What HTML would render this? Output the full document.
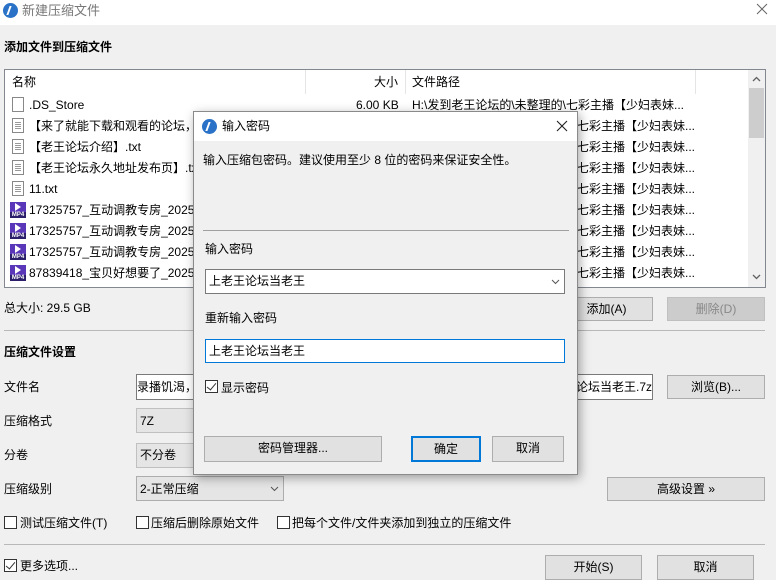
<!DOCTYPE html>
<html><head><meta charset="utf-8"><style>
*{box-sizing:border-box;margin:0;padding:0}
body{width:776px;height:579px;overflow:hidden;background:#f0f0f0;font-family:"Liberation Sans","Noto Sans CJK SC",sans-serif;font-size:12px;color:#000;position:relative}
.a{position:absolute;white-space:nowrap;line-height:16px}
.b{position:absolute}
.btn{position:absolute;background:#e1e1e1;border:1px solid #adadad;text-align:center;line-height:22px;font-size:12px}
.sep{position:absolute;height:1px;background:#a0a0a0}
.cb{position:absolute;width:13px;height:13px;border:1px solid #333;background:#fff}
.cb.k::after{content:"";position:absolute;left:3px;top:0px;width:4px;height:8px;border:solid #333;border-width:0 1.5px 1.5px 0;transform:rotate(40deg)}
.doc{position:absolute;left:12px;width:12px;height:15px;border:1px solid #888;background:#fff}
.doc.l::after{content:"";position:absolute;left:2px;top:3px;width:6px;height:7px;background:repeating-linear-gradient(#999 0 1px,transparent 1px 2px)}
.mp4{position:absolute;left:10px;width:16px;height:16px;background:#5a36b8}
.mp4::before{content:"";position:absolute;left:5px;top:1px;border-left:6px solid #fff;border-top:4px solid transparent;border-bottom:4px solid transparent}
.mp4::after{content:"MP4";position:absolute;left:0;bottom:0;width:16px;height:6px;font-size:6px;line-height:6px;color:#fff;background:#2b1f6a;font-weight:bold;text-align:center}
.ico{position:absolute;width:15px;height:15px;border-radius:50%;background:#2a72c8}
.ico::after{content:"";position:absolute;left:5px;top:3px;width:5px;height:9px;border-left:2px solid #fff;transform:skewX(-20deg)}
svg{position:absolute}
</style></head><body>
<div class="b" style="left:0;top:0;width:776px;height:25px;background:#fff"></div>
<div class="ico" style="left:3px;top:3px"></div>
<div class="a" style="left:22px;top:3px;color:#777;font-size:13px">新建压缩文件</div>
<svg style="left:756px;top:3px" width="12" height="12"><path d="M1 1L11 11M11 1L1 11" stroke="#666" stroke-width="1"/></svg>

<div class="a" style="left:4px;top:39px;font-weight:bold">添加文件到压缩文件</div>

<div class="b" style="left:4px;top:69px;width:762px;height:219px;background:#fff;border:1px solid #828790"></div>
<div class="b" style="left:305px;top:70px;width:1px;height:24px;background:#e5e5e5"></div>
<div class="b" style="left:405px;top:70px;width:1px;height:24px;background:#e5e5e5"></div>
<div class="b" style="left:695px;top:70px;width:1px;height:24px;background:#e5e5e5"></div>
<div class="a" style="left:12px;top:74px">名称</div>
<div class="a" style="left:374px;top:74px">大小</div>
<div class="a" style="left:412px;top:74px">文件路径</div>
<div class="b" style="left:748px;top:70px;width:17px;height:217px;background:#f0f0f0"></div>
<div class="b" style="left:749px;top:88px;width:15px;height:50px;background:#cdcdcd"></div>
<svg style="left:752px;top:76px" width="9" height="6"><path d="M1 5L4.5 1.5L8 5" stroke="#606060" fill="none" stroke-width="1.3"/></svg>
<svg style="left:752px;top:274px" width="9" height="6"><path d="M1 1L4.5 4.5L8 1" stroke="#606060" fill="none" stroke-width="1.3"/></svg>

<div class="doc" style="top:97px"></div><div class="a" style="left:29px;top:97px">.DS_Store</div><div class="a" style="left:356px;top:97px">6.00 KB</div>
<div class="doc l" style="top:118px"></div><div class="a" style="left:29px;top:118px">【来了就能下载和观看的论坛，</div>
<div class="doc l" style="top:139px"></div><div class="a" style="left:29px;top:139px">【老王论坛介绍】.txt</div>
<div class="doc l" style="top:160px"></div><div class="a" style="left:29px;top:160px">【老王论坛永久地址发布页】.tx</div>
<div class="doc l" style="top:181px"></div><div class="a" style="left:29px;top:181px">11.txt</div>
<div class="mp4" style="top:202px"></div><div class="a" style="left:29px;top:202px">17325757_互动调教专房_2025</div>
<div class="mp4" style="top:223px"></div><div class="a" style="left:29px;top:223px">17325757_互动调教专房_2025</div>
<div class="mp4" style="top:244px"></div><div class="a" style="left:29px;top:244px">17325757_互动调教专房_2025</div>
<div class="mp4" style="top:265px"></div><div class="a" style="left:29px;top:265px">87839418_宝贝好想要了_2025</div>
<div class="a" style="left:412px;top:97px">H:\发到老王论坛的\未整理的\七彩主播【少妇表妹...</div>
<div class="a" style="left:577px;top:118px">七彩主播【少妇表妹...</div>
<div class="a" style="left:577px;top:139px">七彩主播【少妇表妹...</div>
<div class="a" style="left:577px;top:160px">七彩主播【少妇表妹...</div>
<div class="a" style="left:577px;top:181px">七彩主播【少妇表妹...</div>
<div class="a" style="left:577px;top:202px">七彩主播【少妇表妹...</div>
<div class="a" style="left:577px;top:223px">七彩主播【少妇表妹...</div>
<div class="a" style="left:577px;top:244px">七彩主播【少妇表妹...</div>
<div class="a" style="left:577px;top:265px">七彩主播【少妇表妹...</div>

<div class="a" style="left:4px;top:300px">总大小: 29.5 GB</div>
<div class="btn" style="left:560px;top:297px;width:93px;height:24px">添加(A)</div>
<div class="btn" style="left:667px;top:297px;width:98px;height:24px;background:#ccc;border-color:#bfbfbf;color:#888">删除(D)</div>
<div class="sep" style="left:4px;top:330px;width:761px;background:#b8b8b8"></div>

<div class="a" style="left:4px;top:344px;font-weight:bold">压缩文件设置</div>
<div class="a" style="left:4px;top:379px">文件名</div>
<div class="b" style="left:136px;top:374px;width:517px;height:26px;background:#fff;border:1px solid #7a7a7a"></div>
<div class="a" style="left:137px;top:379px">录播饥渴，</div>
<div class="a" style="left:576px;top:379px">论坛当老王.7z</div>
<div class="btn" style="left:667px;top:375px;width:98px;height:24px">浏览(B)...</div>
<div class="a" style="left:4px;top:413px">压缩格式</div>
<div class="b" style="left:136px;top:408px;width:147px;height:25px;background:#e5e5e5;border:1px solid #c0c0c0"></div>
<div class="a" style="left:140px;top:413px">7Z</div>
<div class="a" style="left:4px;top:447px">分卷</div>
<div class="b" style="left:136px;top:443px;width:147px;height:25px;background:#e5e5e5;border:1px solid #c0c0c0"></div>
<div class="a" style="left:140px;top:447px">不分卷</div>
<div class="a" style="left:4px;top:481px">压缩级别</div>
<div class="b" style="left:136px;top:476px;width:148px;height:25px;background:#e5e5e5;border:1px solid #adadad"></div>
<div class="a" style="left:140px;top:481px">2-正常压缩</div>
<svg style="left:270px;top:486px" width="9" height="6"><path d="M1 1L4.5 4.5L8 1" stroke="#555" fill="none" stroke-width="1"/></svg>
<div class="btn" style="left:607px;top:477px;width:158px;height:24px">高级设置 »</div>

<div class="cb" style="left:4px;top:516px"></div><div class="a" style="left:20px;top:515px">测试压缩文件(T)</div>
<div class="cb" style="left:136px;top:516px"></div><div class="a" style="left:151px;top:515px">压缩后删除原始文件</div>
<div class="cb" style="left:277px;top:516px"></div><div class="a" style="left:292px;top:515px">把每个文件/文件夹添加到独立的压缩文件</div>
<div class="sep" style="left:4px;top:544px;width:761px;background:#b8b8b8"></div>
<div class="cb k" style="left:4px;top:559px"></div><div class="a" style="left:20px;top:558px">更多选项...</div>
<div class="btn" style="left:545px;top:555px;width:97px;height:25px">开始(S)</div>
<div class="btn" style="left:657px;top:555px;width:97px;height:25px">取消</div>

<div class="b" style="left:193px;top:111px;width:385px;height:364px;background:#f0f0f0;border:1px solid #8a8a8a;box-shadow:2px 3px 10px rgba(0,0,0,.35)"></div>
<div class="b" style="left:194px;top:112px;width:383px;height:29px;background:#fff"></div>
<div class="ico" style="left:202px;top:119px"></div>
<div class="a" style="left:222px;top:118px">输入密码</div>
<svg style="left:556px;top:120px" width="12" height="12"><path d="M1 1L11 11M11 1L1 11" stroke="#222" stroke-width="1.1"/></svg>
<div class="a" style="left:203px;top:152px">输入压缩包密码。建议使用至少 8 位的密码来保证安全性。</div>
<div class="sep" style="left:203px;top:230px;width:366px"></div>
<div class="a" style="left:205px;top:241px">输入密码</div>
<div class="b" style="left:205px;top:269px;width:360px;height:25px;background:#fff;border:1px solid #7a7a7a"></div>
<div class="a" style="left:209px;top:273px">上老王论坛当老王</div>
<svg style="left:551px;top:279px" width="9" height="6"><path d="M1 1L4.5 4.5L8 1" stroke="#555" fill="none" stroke-width="1"/></svg>
<div class="a" style="left:205px;top:310px">重新输入密码</div>
<div class="b" style="left:205px;top:339px;width:360px;height:24px;background:#fff;border:1px solid #0078d7"></div>
<div class="a" style="left:209px;top:343px">上老王论坛当老王</div>
<div class="cb k" style="left:205px;top:380px"></div><div class="a" style="left:221px;top:380px">显示密码</div>
<div class="btn" style="left:204px;top:436px;width:178px;height:26px">密码管理器...</div>
<div class="btn" style="left:411px;top:436px;width:70px;height:26px;border:2px solid #0078d7;line-height:22px">确定</div>
<div class="btn" style="left:492px;top:436px;width:72px;height:26px">取消</div>
</body></html>
